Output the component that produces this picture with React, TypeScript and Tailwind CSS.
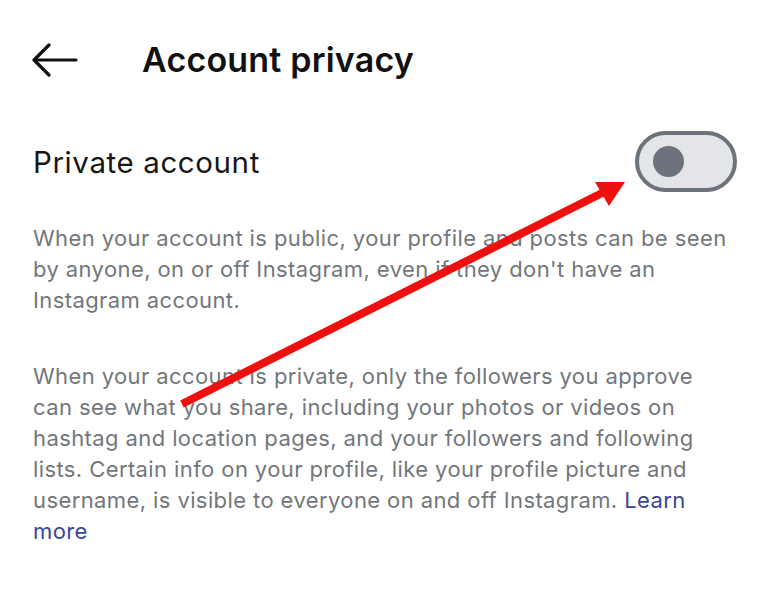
import React from "react";

const BackArrow = () => (
  <svg width="46" height="34" viewBox="0 0 46 34" fill="none">
    <path
      d="M17 2 L2 17 L17 32 M2 17 L44 17"
      stroke="#111"
      strokeWidth="3.2"
      strokeLinecap="round"
      strokeLinejoin="round"
    />
  </svg>
);

const Toggle = () => (
  <div className="w-[102px] h-[61px] rounded-full border-[4px] border-[#6c737c] bg-[#e3e5e9] flex items-center pl-[14px]">
    <div className="w-[31px] h-[31px] rounded-full bg-[#6c737c]" />
  </div>
);

const App = () => {
  return (
    <div
      className="relative w-[768px] h-[603px] bg-white overflow-hidden"
      style={{ fontFamily: "Inter, 'Noto Sans', sans-serif" }}
    >
      <div className="flex items-center pt-[40px] pl-[32px] h-[80px]">
        <BackArrow />
        <h1 className="ml-[64px] text-[34px] leading-[40px] font-semibold text-[#111] tracking-[0.2px]">
          Account privacy
        </h1>
      </div>

      <div className="flex items-center justify-between mt-[51px] pl-[33px] pr-[31px] h-[61px]">
        <span className="text-[29.5px] leading-[36px] text-[#161616] tracking-[0.6px]">
          Private account
        </span>
        <Toggle />
      </div>

      <div className="pl-[33px] pr-[10px] text-[22px] leading-[31px] text-[#72777c] tracking-[0.4px]">
        <p className="mt-[31px]">
          When your account is public, your profile and posts can be seen
          <br />
          by anyone, on or off Instagram, even if they don't have an
          <br />
          Instagram account.
        </p>
        <p className="mt-[45px]">
          When your account is private, only the followers you approve
          <br />
          can see what you share, including your photos or videos on
          <br />
          hashtag and location pages, and your followers and following
          <br />
          lists. Certain info on your profile, like your profile picture and
          <br />
          username, is visible to everyone on and off Instagram.{" "}
          <span className="text-[#3a4697]">Learn</span>
          <br />
          <span className="text-[#3a4697]">more</span>
        </p>
      </div>

      {/* red annotation arrow drawn over the screenshot */}
      <svg
        className="absolute inset-0 pointer-events-none"
        width="768"
        height="603"
        viewBox="0 0 768 603"
      >
        <line
          x1="182"
          y1="404"
          x2="604"
          y2="192"
          stroke="#ee0f0f"
          strokeWidth="8"
        />
        <polygon points="625,182 595,182 609,206" fill="#ee0f0f" />
      </svg>
    </div>
  );
};

export default App;
